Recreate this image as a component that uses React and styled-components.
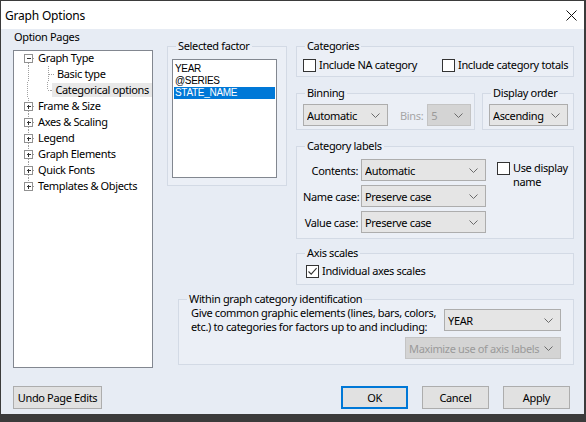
import React from "react";
import styled, { createGlobalStyle } from "styled-components";

const UI = `"Noto Sans", "Open Sans", sans-serif`;

const Global = createGlobalStyle`
  *, *::before, *::after { box-sizing: border-box; }
  html, body { margin: 0; padding: 0; background: #3a3a3a; }
  body { font-family: ${UI}; font-size: 11px; letter-spacing: -0.35px; color: #000; }
`;

const Frame = styled.div`
  width: 586px;
  height: 422px;
  padding: 1px 2px 0 1px;
  display: flex;
  flex-direction: column;
  background: #3b3b3b;
  overflow: hidden;
`;

const Dialog = styled.div`
  height: 413px;
  display: flex;
  flex-direction: column;
  background: #e7ecf4;
`;

const TitleBar = styled.div`
  height: 28px;
  flex: none;
  background: #fff;
  display: flex;
  align-items: center;
  justify-content: space-between;
  padding: 0 7px 0 4px;
  font-size: 12px;
  letter-spacing: -0.2px;
`;

const Body = styled.div`
  flex: 1;
  display: flex;
  flex-direction: column;
  padding: 1px 10px 0 12px;
`;

const Main = styled.div`
  display: flex;
  gap: 14px;
`;

const LeftCol = styled.div`
  width: 140px;
  flex: none;
  display: flex;
  flex-direction: column;
`;

const PaneLabel = styled.div`
  line-height: 14px;
  margin: 0 0 6px 1px;
`;

const TreeBox = styled.div`
  height: 318px;
  background: #fff;
  border: 1px solid #828790;
`;

const TreeList = styled.div`
  margin-top: -1px;
  display: flex;
  flex-direction: column;
`;

const TreeRow = styled.div`
  display: flex;
  align-items: center;
  height: 16px;
  white-space: nowrap;
`;

const TreeLabel = styled.span`
  line-height: 14px;
  padding: 0 3px;
  background: ${(p) => (p.$selected ? "#e8e8e8" : "transparent")};
`;

const RightArea = styled.div`
  width: 407px;
  flex: none;
  display: flex;
  flex-direction: column;
  padding-top: 9px;
`;

const TopRow = styled.div`
  display: flex;
  gap: 9px;
  align-items: flex-start;
`;

const Group = styled.fieldset`
  margin: ${(p) => p.$mt || 0}px 0 0 ${(p) => p.$ml || 0}px;
  padding: ${(p) => p.$pt || 0}px ${(p) => p.$pr || 8}px 0 ${(p) => p.$pl || 6}px;
  border: 1px solid #d3dae5;
  background: #ebeff6;
  height: ${(p) => p.$h}px;
  width: ${(p) => (p.$w ? `${p.$w}px` : "auto")};
  min-width: 0;
  & > legend {
    padding: 0 2px;
    margin-left: ${(p) => 2 - (p.$pl || 6) + 6}px;
    line-height: 14px;
    font-size: 11px;
  }
`;

const RightCol = styled.div`
  width: 278px;
  flex: none;
  display: flex;
  flex-direction: column;
`;

const ListBox = styled.div`
  width: 105px;
  height: 119px;
  background: #fff;
  border: 1px solid #828790;
  padding-top: 3px;
  font-family: "Liberation Sans", Arial, sans-serif;
  font-size: 10px;
  letter-spacing: -0.3px;
`;

const ListItem = styled.div`
  height: 12px;
  line-height: 12px;
  margin: 0 1px;
  padding-left: 1px;
  background: ${(p) => (p.$selected ? "#0078d7" : "transparent")};
  color: ${(p) => (p.$selected ? "#fff" : "#000")};
`;

const CheckRow = styled.div`
  display: grid;
  grid-template-columns: 139px 1fr;
  align-items: center;
`;

const CheckLabel = styled.label`
  display: flex;
  align-items: ${(p) => (p.$top ? "flex-start" : "center")};
  gap: 3px;
  line-height: 14px;
  margin-left: ${(p) => p.$inset || 0}px;
  white-space: nowrap;
`;

const Box = styled.span`
  width: 13px;
  height: 13px;
  flex: none;
  border: 1px solid #333;
  background: #fff;
  display: flex;
  align-items: center;
  justify-content: center;
  margin-top: ${(p) => (p.$top ? 1 : 0)}px;
`;

const Row = styled.div`
  display: flex;
  align-items: center;
`;

const SideRow = styled.div`
  display: flex;
  gap: 7px;
  margin-top: 9px;
`;

const Combo = styled.div`
  width: ${(p) => p.$w}px;
  height: 22px;
  flex: none;
  display: flex;
  align-items: center;
  padding: 0 7px 0 3px;
  border: 1px solid ${(p) => (p.$disabled ? "#c4c4c4" : "#adadad")};
  background: ${(p) => (p.$disabled ? "#d4d4d4" : "#e5e5e5")};
  color: ${(p) => (p.$disabled ? "#9a9a9a" : "#000")};
  white-space: nowrap;
`;

const ComboText = styled.span`
  flex: 1;
  overflow: hidden;
`;

const DimText = styled.span`
  color: #a6a6a6;
  margin: 0 4px 0 12px;
`;

const LabelGrid = styled.div`
  display: grid;
  grid-template-columns: 55px 125px 1fr;
  grid-template-rows: repeat(3, 22px);
  column-gap: 3px;
  row-gap: 4px;
  align-items: center;
`;

const FieldLabel = styled.span`
  text-align: right;
  white-space: nowrap;
`;

const SideCheck = styled.div`
  grid-column: 3;
  grid-row: 1 / span 3;
  align-self: start;
  margin: 2px 0 0 8px;
`;

const Within = styled.div`
  display: grid;
  grid-template-columns: 1fr 117px;
  row-gap: 3px;
  align-items: center;
`;

const Para = styled.div`
  line-height: 14px;
  white-space: nowrap;
`;

const WithinBottom = styled.div`
  grid-column: 1 / span 2;
  justify-self: end;
`;

const ButtonRow = styled.div`
  display: flex;
  align-items: center;
  margin-top: 18px;
  padding-right: 4px;
`;

const Button = styled.button`
  height: 23px;
  width: ${(p) => p.$w || 67}px;
  margin-left: ${(p) => p.$ml || 0}px;
  padding: 0;
  font-family: ${UI};
  font-size: 11px;
  letter-spacing: -0.35px;
  color: #000;
  background: #e1e1e1;
  border: ${(p) => (p.$default ? "2px solid #0078d7" : "1px solid #adadad")};
`;

const Spacer = styled.div`
  flex: 1;
`;

const Strip = styled.div`
  flex: 1;
  background: #3b3b3b;
`;

const Chevron = () => (
  <svg width="9" height="5" viewBox="0 0 9 5">
    <path d="M0.5 0.5 L4.5 4.5 L8.5 0.5" stroke="#6b6b6b" fill="none" strokeWidth="1" />
  </svg>
);

const Select = ({ w, disabled, children }) => (
  <Combo $w={w} $disabled={disabled}>
    <ComboText>{children}</ComboText>
    <Chevron />
  </Combo>
);

const Check = ({ checked, top }) => (
  <Box $top={top}>
    {checked && (
      <svg width="11" height="11" viewBox="0 0 11 11">
        <path d="M1.5 5.5 L4.2 8.2 L9.6 2.2" stroke="#333" strokeWidth="1.1" fill="none" />
      </svg>
    )}
  </Box>
);

const DOT = { stroke: "#a0a0a0", strokeWidth: 1, strokeDasharray: "1 1", shapeRendering: "crispEdges" };

const Connector = ({ level, exp, first, last }) => {
  if (level === 0) {
    return (
      <svg width="21" height="16" viewBox="0 0 21 16">
        {!first && <line x1="14.5" y1="0" x2="14.5" y2="4" style={DOT} />}
        {!last && <line x1="14.5" y1="13" x2="14.5" y2="16" style={DOT} />}
        <line x1="19" y1="8.5" x2="21" y2="8.5" style={DOT} />
        <rect x="10.5" y="4.5" width="8" height="8" fill="#fff" stroke="#919191" shapeRendering="crispEdges" />
        <line x1="12.5" y1="8.5" x2="17" y2="8.5" stroke="#333" shapeRendering="crispEdges" />
        {exp === "plus" && <line x1="14.5" y1="6.5" x2="14.5" y2="11" stroke="#333" shapeRendering="crispEdges" />}
      </svg>
    );
  }
  return (
    <svg width="40" height="16" viewBox="0 0 40 16">
      <line x1="14.5" y1="0" x2="14.5" y2="16" style={DOT} />
      <line x1="34.5" y1="0" x2="34.5" y2={last ? 8.5 : 16} style={DOT} />
      <line x1="35" y1="8.5" x2="40" y2="8.5" style={DOT} />
    </svg>
  );
};

const TREE = [
  { label: "Graph Type", level: 0, exp: "minus", first: true },
  { label: "Basic type", level: 1 },
  { label: "Categorical options", level: 1, last: true, selected: true },
  { label: "Frame & Size", level: 0, exp: "plus" },
  { label: "Axes & Scaling", level: 0, exp: "plus" },
  { label: "Legend", level: 0, exp: "plus" },
  { label: "Graph Elements", level: 0, exp: "plus" },
  { label: "Quick Fonts", level: 0, exp: "plus" },
  { label: "Templates & Objects", level: 0, exp: "plus", last: true },
];

const FACTORS = ["YEAR", "@SERIES", "STATE_NAME"];

export default function App() {
  return (
    <>
      <Global />
      <Frame>
        <Dialog>
          <TitleBar>
            <span>Graph Options</span>
            <svg width="11" height="11" viewBox="0 0 11 11">
              <path d="M0.5 0.5 L10.5 10.5 M10.5 0.5 L0.5 10.5" stroke="#111" strokeWidth="1" />
            </svg>
          </TitleBar>
          <Body>
            <Main>
              <LeftCol>
                <PaneLabel>Option Pages</PaneLabel>
                <TreeBox>
                  <TreeList>
                    {TREE.map((n) => (
                      <TreeRow key={n.label}>
                        <Connector {...n} />
                        <TreeLabel $selected={n.selected}>{n.label}</TreeLabel>
                      </TreeRow>
                    ))}
                  </TreeList>
                </TreeBox>
              </LeftCol>
              <RightArea>
                <TopRow>
                  <Group $w={120} $h={147} $pt={6} $pl={4}>
                    <legend>Selected factor</legend>
                    <ListBox>
                      {FACTORS.map((f) => (
                        <ListItem key={f} $selected={f === "STATE_NAME"}>
                          {f}
                        </ListItem>
                      ))}
                    </ListBox>
                  </Group>
                  <RightCol>
                    <Group $h={38} $pt={5}>
                      <legend>Categories</legend>
                      <CheckRow>
                        <CheckLabel>
                          <Check />
                          Include NA category
                        </CheckLabel>
                        <CheckLabel>
                          <Check />
                          Include category totals
                        </CheckLabel>
                      </CheckRow>
                    </Group>
                    <SideRow>
                      <Group $w={179} $h={44} $pt={4}>
                        <legend>Binning</legend>
                        <Row>
                          <Select w={85}>Automatic</Select>
                          <DimText>Bins:</DimText>
                          <Select w={44} disabled>
                            5
                          </Select>
                        </Row>
                      </Group>
                      <Group $w={92} $h={44} $pt={4}>
                        <legend>Display order</legend>
                        <Select w={79}>Ascending</Select>
                      </Group>
                    </SideRow>
                    <Group $mt={9} $h={100} $pt={6}>
                      <legend>Category labels</legend>
                      <LabelGrid>
                        <FieldLabel>Contents:</FieldLabel>
                        <Select w={125}>Automatic</Select>
                        <SideCheck>
                          <CheckLabel $top>
                            <Check top />
                            <span>
                              Use display
                              <br />
                              name
                            </span>
                          </CheckLabel>
                        </SideCheck>
                        <FieldLabel>Name case:</FieldLabel>
                        <Select w={125}>Preserve case</Select>
                        <FieldLabel>Value case:</FieldLabel>
                        <Select w={125}>Preserve case</Select>
                      </LabelGrid>
                    </Group>
                    <Group $mt={7} $h={39} $pt={4}>
                      <legend>Axis scales</legend>
                      <CheckLabel $inset={3}>
                        <Check checked />
                        Individual axes scales
                      </CheckLabel>
                    </Group>
                  </RightCol>
                </TopRow>
                <Group $ml={11} $mt={7} $h={73} $pt={0} $pl={12} $pr={12}>
                  <legend>Within graph category identification</legend>
                  <Within>
                    <Para>
                      Give common graphic elements (lines, bars, colors,
                      <br />
                      etc.) to categories for factors up to and including:
                    </Para>
                    <Select w={117}>YEAR</Select>
                    <WithinBottom>
                      <Select w={156} disabled>
                        Maximize use of axis labels
                      </Select>
                    </WithinBottom>
                  </Within>
                </Group>
              </RightArea>
            </Main>
            <ButtonRow>
              <Button $w={89}>Undo Page Edits</Button>
              <Spacer />
              <Button $default>OK</Button>
              <Button $ml={14}>Cancel</Button>
              <Button $ml={14}>Apply</Button>
            </ButtonRow>
          </Body>
        </Dialog>
        <Strip />
      </Frame>
    </>
  );
}
